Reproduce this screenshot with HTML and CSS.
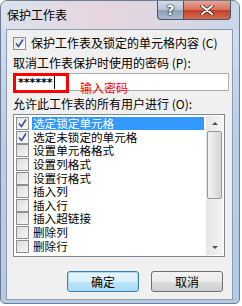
FILE: index.html
```html
<!DOCTYPE html>
<html lang="zh-CN">
<head>
<meta charset="UTF-8">
<title>保护工作表</title>
<link rel="stylesheet" href="styles.css">
</head>
<body>
  <div class="window">
    <div class="titlebar">
      <span class="title">保护工作表</span>
      <div class="caption-btns">
        <span class="cap help">?</span>
        <span class="cap close">
          <svg width="14" height="10" viewBox="0 0 14 10"><path d="M2 1 L12 9 M12 1 L2 9" stroke="#3a1a1a" stroke-width="3.4" stroke-linecap="round"/><path d="M2 1 L12 9 M12 1 L2 9" stroke="#fff" stroke-width="2" stroke-linecap="round"/></svg>
        </span>
      </div>
    </div>

    <div class="panel">
      <label class="row">
        <span class="box checked"><svg width="11" height="11" viewBox="0 0 11 11"><path d="M2 5.5 L4.5 8.5 L9 1.5" fill="none" stroke="#3a4fa0" stroke-width="1.6"/></svg></span>
        <span>保护工作表及锁定的单元格内容 (C)</span>
      </label>

      <div class="label">取消工作表保护时使用的密码 (P):</div>
      <div class="input">
        <span class="pw">******</span><span class="caret"></span>
        <span class="mark"></span>
        <span class="note">输入密码</span>
      </div>

      <div class="label">允许此工作表的所有用户进行 (O):</div>
      <div class="list">
        <ul class="items">
          <li class="sel"><span class="box checked"><svg width="11" height="11" viewBox="0 0 11 11"><path d="M2 5.5 L4.5 8.5 L9 1.5" fill="none" stroke="#3a4fa0" stroke-width="1.6"/></svg></span><span class="txt">选定锁定单元格</span></li>
          <li><span class="box checked"><svg width="11" height="11" viewBox="0 0 11 11"><path d="M2 5.5 L4.5 8.5 L9 1.5" fill="none" stroke="#3a4fa0" stroke-width="1.6"/></svg></span><span class="txt">选定未锁定的单元格</span></li>
          <li><span class="box"></span><span class="txt">设置单元格格式</span></li>
          <li><span class="box"></span><span class="txt">设置列格式</span></li>
          <li><span class="box"></span><span class="txt">设置行格式</span></li>
          <li><span class="box"></span><span class="txt">插入列</span></li>
          <li><span class="box"></span><span class="txt">插入行</span></li>
          <li><span class="box"></span><span class="txt">插入超链接</span></li>
          <li><span class="box"></span><span class="txt">删除列</span></li>
          <li><span class="box"></span><span class="txt">删除行</span></li>
        </ul>
        <div class="scroll">
          <span class="arrow up"></span>
          <span class="thumb"></span>
          <span class="track"></span>
          <span class="arrow down"></span>
        </div>
      </div>

      <div class="buttons">
        <button class="btn default">确定</button>
        <button class="btn">取消</button>
      </div>
    </div>
  </div>
</body>
</html>
```

FILE: styles.css
```css
body { margin: 0; background: #fff; font-family: "Noto Sans CJK SC", "Microsoft YaHei", sans-serif; font-size: 12px; color: #000; }
.window { width: 238px; height: 302px; border: 1px solid #6d7c92; border-radius: 7px 7px 5px 5px; background: linear-gradient(#d6e1f0, #bccfe7 40%, #b4c9e4); display: flex; flex-direction: column; overflow: hidden; }
.titlebar { height: 28px; display: flex; justify-content: space-between; align-items: flex-start; background: linear-gradient(90deg, #d9e2ee, #e6d6de 40%, #dcd6e2 70%, #c9d7ea); }
.title { margin: 6px 0 0 6px; line-height: 16px; }
.caption-btns { display: flex; margin-right: 8px; }
.cap { height: 18px; border: 1px solid #4a5568; border-top: 0; display: flex; align-items: center; justify-content: center; }
.help { width: 25px; border-radius: 0 0 0 4px; border-right: 0; background: linear-gradient(#d5dde8, #b7c4d4 50%, #8fa0b6 51%, #a9b9cd); color: #fff; font: bold 14px "DejaVu Sans", sans-serif; text-shadow: 0 0 1px #223, 0 0 1px #223, 0 0 2px #223; }
.close { width: 46px; border-radius: 0 0 4px 0; background: linear-gradient(#e8a594, #d46f58 50%, #c0402a 51%, #d56c4c); }

.panel { flex: 1; margin: 0 6px 3px 5px; background: #f0f0f0; border: 1px solid #8a9bb4; padding: 6px 0 0 6px; display: flex; flex-direction: column; }
.row { display: flex; align-items: center; gap: 5px; line-height: 14px; }
.box { width: 11px; height: 11px; border: 1px solid #8e8f8f; background: linear-gradient(135deg, #dcdcdc, #f6f6f6); display: inline-flex; flex-shrink: 0; }
.box.checked { background: linear-gradient(135deg, #e4e4e4, #fafafa); }
.label { margin-top: 6px; line-height: 14px; }

.input { position: relative; margin-top: 3px; width: 216px; height: 18px; background: #fff; border: 1px solid #abadb3; box-sizing: border-box; display: flex; align-items: center; padding-left: 4px; }
.pw { font: bold 11px "DejaVu Sans", sans-serif; }
.caret { width: 1px; height: 13px; background: #000; margin-left: 1px; }
.mark { position: absolute; left: -1px; top: -1px; width: 50px; height: 14px; border: 3px solid #ff0000; }
.note { position: absolute; left: 66px; top: 8px; color: #ff0000; line-height: 12px; }

.list { margin-top: 3px; width: 212px; height: 143px; box-sizing: border-box; border: 1px solid #828790; background: #fff; display: flex; }
.items { list-style: none; margin: 0; padding: 2px 0 0 2px; flex: 1; overflow: hidden; }
.items li { display: flex; align-items: center; height: 13.6px; gap: 3px; font-size: 11.6px; }
.items .txt { flex: 1; line-height: 13px; height: 13px; padding-left: 1px; }
.items .sel .txt { background: #3399ff; color: #fff; margin-right: 2px; }
.scroll { width: 17px; margin: 1px 1px 1px 0; background: linear-gradient(90deg, #e6e6e6, #f4f4f4); display: flex; flex-direction: column; align-items: center; }
.arrow { width: 0; height: 0; border-left: 3px solid transparent; border-right: 3px solid transparent; margin: 6px 0; }
.arrow.up { border-bottom: 3px solid #4d4d4d; }
.arrow.down { border-top: 3px solid #4d4d4d; }
.thumb { width: 13px; height: 66px; border: 1px solid #979797; border-radius: 2px; background: linear-gradient(90deg, #f2f2f2, #e4e4e4 50%, #d4d4d4); }
.track { flex: 1; }

.buttons { display: flex; justify-content: flex-end; gap: 12px; margin: 14px 9px 0 0; }
.btn { width: 72px; height: 21px; font: 12px "Noto Sans CJK SC", sans-serif; line-height: 16px; padding: 0; border: 1px solid #707070; border-radius: 3px; background: linear-gradient(#f2f2f2, #ebebeb 50%, #dddddd 51%, #cfcfcf); color: #000; }
.btn.default { border-color: #3c7fb1; box-shadow: inset 0 0 0 1px #a9dcf4; background: linear-gradient(#eaf6fd, #d9f0fc 50%, #bee6fd 51%, #a7d9f5); }
```
